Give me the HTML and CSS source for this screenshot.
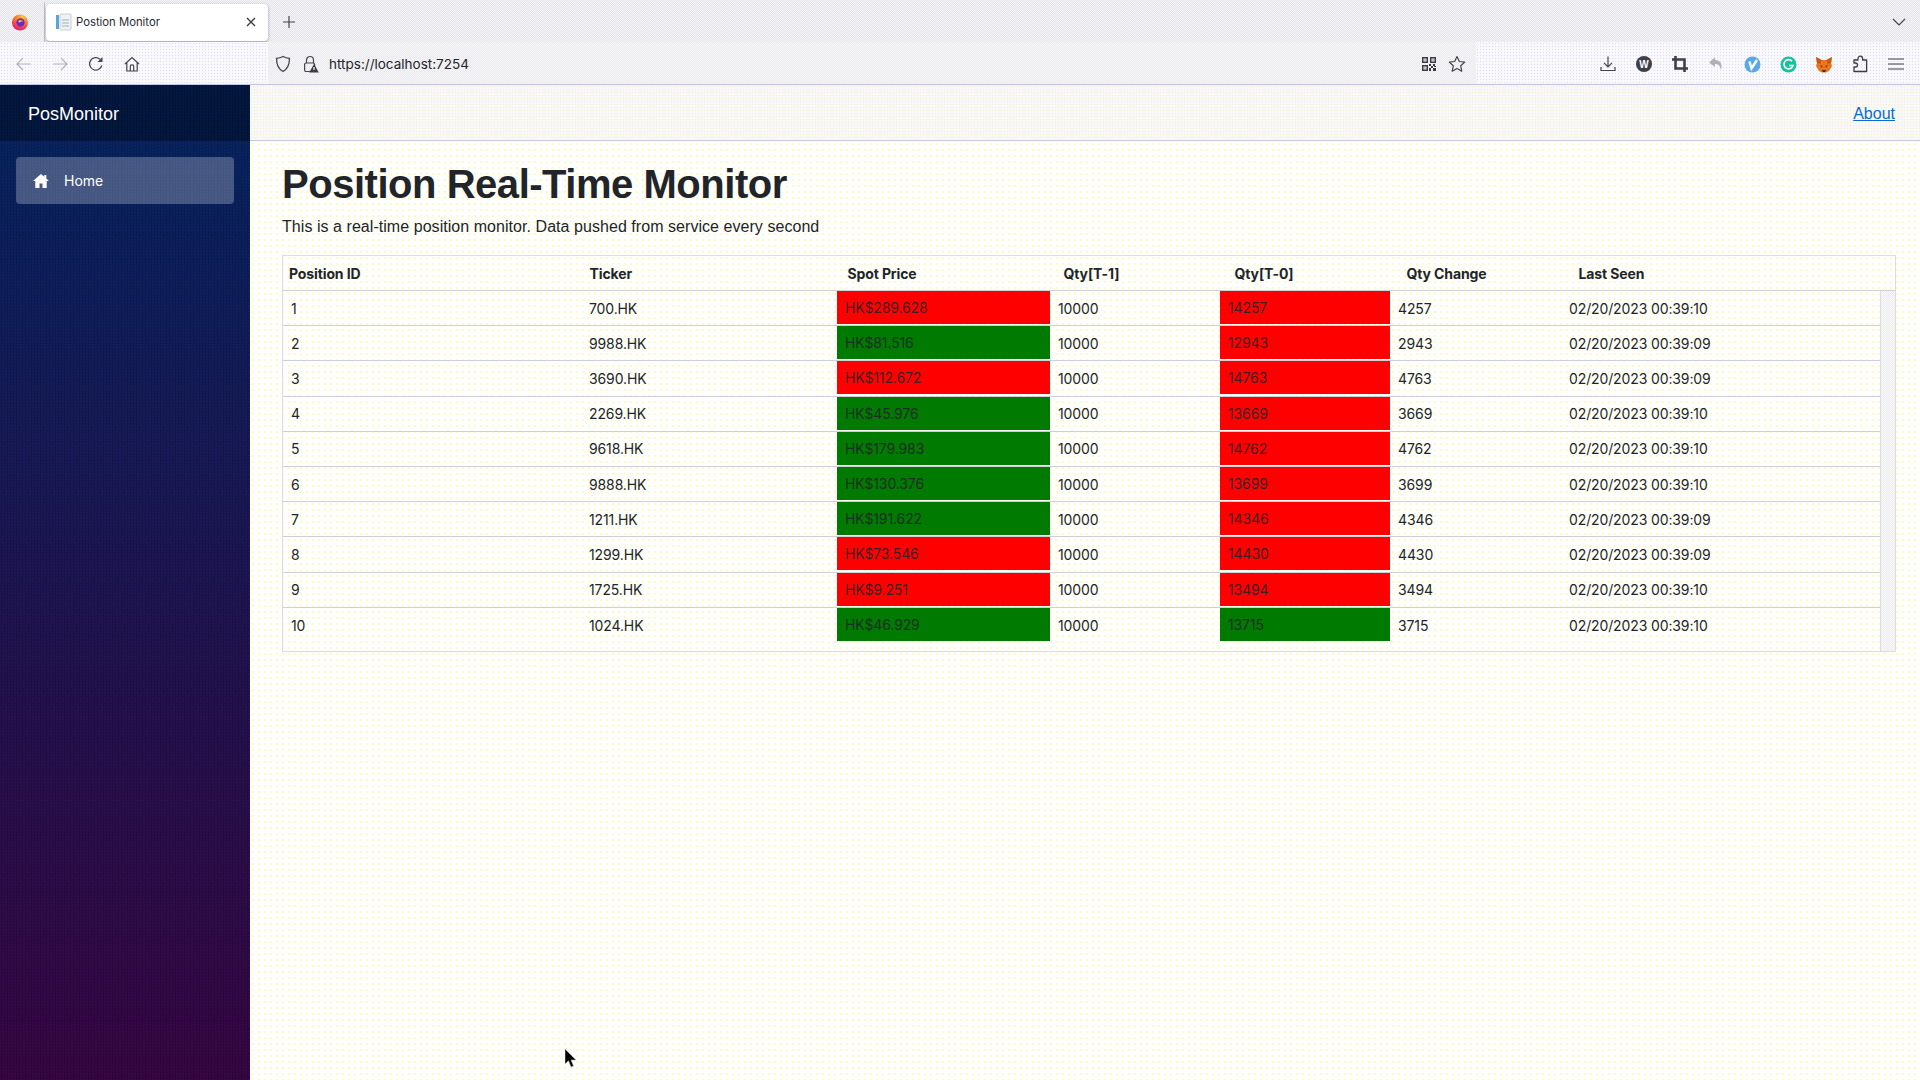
FILE: index.html
```html
<!DOCTYPE html>
<html lang="en">
<head>
  <meta charset="UTF-8">
  <title>Postion Monitor</title>
  <link rel="stylesheet" href="styles.css">
</head>
<body>

  <!-- browser tab strip -->
  <div class="tabstrip">
    <svg class="ff-logo" width="18" height="18" viewBox="0 0 18 18">
      <defs>
        <radialGradient id="ffGrad" cx="65%" cy="15%" r="95%">
          <stop offset="0" stop-color="#ffc93a"/>
          <stop offset=".45" stop-color="#ff7a2a"/>
          <stop offset=".8" stop-color="#f02a5c"/>
          <stop offset="1" stop-color="#c81e8c"/>
        </radialGradient>
      </defs>
      <circle cx="9" cy="9.5" r="8" fill="url(#ffGrad)"/>
      <circle cx="9.5" cy="9.5" r="4.2" fill="#6a2bc4"/>
      <path d="M7 8c2-1.500 4-1 5 .5-1.500-.3-2.500 0-3 1-.7 0-1.500-.5-2-1.500z" fill="#ffb02e"/>
    </svg>
    <span class="tab-divider"></span>
    <div class="tab">
      <svg width="16" height="18" viewBox="0 0 16 18">
        <rect x="0" y="2" width="3" height="14" fill="#5aa5dc"/>
        <rect x="4" y="1" width="11" height="16" rx="1" fill="#eef2f4" stroke="#b9c4c9" stroke-width=".8"/>
        <path d="M6 7h7M6 10h7M6 13h7" stroke="#a5b1b7" stroke-width="1"/>
      </svg>
      <span class="tab-title">Postion Monitor</span>
      <svg class="tab-close" width="10" height="10" viewBox="0 0 10 10"><path d="M1 1l8 8M9 1l-8 8" stroke="#33333b" stroke-width="1.200"/></svg>
    </div>
    <svg class="tab-plus" width="12" height="12" viewBox="0 0 12 12"><path d="M6 0v12M0 6h12" stroke="#44444c" stroke-width="1.200"/></svg>
    <svg class="tab-chevron" width="14" height="8" viewBox="0 0 14 8"><path d="M1 1l6 6 6-6" fill="none" stroke="#44444c" stroke-width="1.200"/></svg>
  </div>

  <!-- browser toolbar -->
  <div class="toolbar">
    <div class="nav-btns">
      <span class="tool-btn"><svg width="16" height="14" viewBox="0 0 16 14"><path d="M15 7H1.500M7 1L1 7l6 6" fill="none" stroke="#b4b4bc" stroke-width="1.200"/></svg></span>
      <span class="tool-btn"><svg width="16" height="14" viewBox="0 0 16 14"><path d="M1 7h13.500M9 1l6 6-6 6" fill="none" stroke="#b4b4bc" stroke-width="1.200"/></svg></span>
      <span class="tool-btn"><svg width="16" height="16" viewBox="0 0 16 16"><path d="M13.800 9.500A6.200 6.200 0 1 1 12 3.300" fill="none" stroke="#44444c" stroke-width="1.300"/><path d="M14.500 1v5h-5z" fill="#44444c"/></svg></span>
      <span class="tool-btn"><svg width="16" height="16" viewBox="0 0 16 16"><path d="M1 8l7-6.500L15 8M2.800 6.500V15h10.400V6.500M6.300 15v-4.500a1.700 1.700 0 0 1 3.400 0V15" fill="none" stroke="#44444c" stroke-width="1.200"/></svg></span>
    </div>
    <div class="urlbar">
      <svg class="url-shield" width="16" height="18" viewBox="0 0 16 18"><path d="M8 1.500c2 1.200 4 1.700 6.500 1.800 0 6.200-1.800 10.700-6.500 13.200C3.300 14 1.500 9.500 1.500 3.300 4 3.200 6 2.700 8 1.500z" fill="none" stroke="#44444c" stroke-width="1.300"/></svg>
      <svg class="url-lock" width="16" height="18" viewBox="0 0 16 18">
        <path d="M3.500 8V5a3.500 3.500 0 0 1 7 0v3" fill="none" stroke="#44444c" stroke-width="1.200"/>
        <rect x="1.600" y="8" width="10" height="8.500" rx="1.500" fill="none" stroke="#44444c" stroke-width="1.200"/>
        <path d="M11 9l4.800 8.500H6.200z" fill="#3c3c44"/>
        <path d="M11 12v3" stroke="#fff" stroke-width="1.200"/>
      </svg>
      <span class="url-text">https://localhost:7254</span>
      <svg class="url-qr" width="14" height="14" viewBox="0 0 14 14" fill="#3c3c44">
        <path fill-rule="evenodd" d="M0 0h6v6H0zM1.500 1.500v3h3v-3zM8 0h6v6H8zM9.500 1.500v3h3v-3zM0 8h6v6H0zM1.500 9.500v3h3v-3z"/>
        <path d="M2.500 2.500h1v1h-1zM10.500 2.500h1v1h-1zM2.500 10.500h1v1h-1zM7 7h2v2H7zM9 9h2v2H9zM11 7h2v2h-2zM7 11h2v3H7zM11 11h3v3h-3zM12 9h2v1h-2z"/>
      </svg>
      <svg class="url-star" width="18" height="18" viewBox="0 0 18 18"><path d="M9 1.500l2.300 5 5.400.6-4 3.700 1.100 5.400L9 13.500l-4.800 2.700 1.100-5.400-4-3.700 5.400-.6z" fill="none" stroke="#44444c" stroke-width="1.200" stroke-linejoin="round"/></svg>
    </div>
    <div class="ext-btns">
      <span class="tool-btn"><svg width="16" height="16" viewBox="0 0 16 16"><path d="M8 .5v10M4 6.800l4 4 4-4M1 11v3.500h14V11" fill="none" stroke="#44444c" stroke-width="1.200"/></svg></span>
      <span class="tool-btn"><svg width="16" height="16" viewBox="0 0 16 16"><circle cx="8" cy="8" r="8" fill="#3f3f4a"/><text x="8" y="11.500" text-anchor="middle" class="ext-w">W</text></svg></span>
      <span class="tool-btn"><svg width="16" height="16" viewBox="0 0 16 16"><path d="M3.500 0v12.500H16M0 3.500h12.500V16" fill="none" stroke="#3f3f4a" stroke-width="2.600"/></svg></span>
      <span class="tool-btn"><svg width="16" height="16" viewBox="0 0 16 16"><path d="M7 1L1 6.500 7 11V8c3 0 5 1 6 6 1.500-5 .5-9.500-6-10z" fill="#b0b0b6"/></svg></span>
      <span class="tool-btn"><svg width="17" height="17" viewBox="0 0 17 17"><circle cx="8.500" cy="8.500" r="8" fill="#5aa9e6"/><path d="M5.500 5.500l2 7L13 4" fill="none" stroke="#fff" stroke-width="2.400"/></svg></span>
      <span class="tool-btn"><svg width="17" height="17" viewBox="0 0 17 17"><circle cx="8.500" cy="8.500" r="8" fill="#15c39a"/><path d="M12 5.200A4.600 4.600 0 1 0 13 9.500h-4" fill="none" stroke="#fff" stroke-width="1.600"/></svg></span>
      <span class="tool-btn"><svg width="18" height="17" viewBox="0 0 18 17"><path d="M1 1l5.500 3h5L17 1l-1 6 1 3-3 5-3 1.500H7L4 15 1 10l1-3z" fill="#e8761f"/><path d="M5 9l2.500 1-.5 2zM13 9l-2.500 1 .5 2z" fill="#7a3a10"/><path d="M7 14h4l-1 2H8z" fill="#3a2a22"/><path d="M1 1l5.500 3L5 8 2 7zM17 1l-5.500 3L13 8l3-1z" fill="#c9590f"/></svg></span>
      <span class="tool-btn"><svg width="16" height="18" viewBox="0 0 16 18"><path d="M6 3.500a2.300 2.300 0 0 1 4.600 0V5h4v11.500H2V12h1.500a2 2 0 0 0 0-4H2V5h4z" fill="none" stroke="#3c3c44" stroke-width="1.300" stroke-linejoin="round"/></svg></span>
      <span class="tool-btn"><svg width="16" height="12" viewBox="0 0 16 12"><path d="M0 1h16M0 6h16M0 11h16" stroke="#3c3c44" stroke-width="1.200"/></svg></span>
    </div>
  </div>

  <div class="page">
    <!-- left nav -->
    <div class="sidebar">
      <div class="brand">PosMonitor</div>
      <div class="nav-item">
        <svg width="16" height="16" viewBox="0 0 16 16"><path fill="#fff" d="M8 1L0 8h2.300v7h4.200v-4.500h3V15h4.200V8H16l-2.700-2.400V2h-2v1.800z"/></svg>
        <span>Home</span>
      </div>
    </div>

    <div class="main">
      <div class="top-row"><a href="#">About</a></div>
      <div class="content">
        <h1>Position Real-Time Monitor</h1>
        <p>This is a real-time position monitor. Data pushed from service every second</p>

        <div class="pos-table">
          <div class="head-row">
            <div>Position ID</div>
            <div>Ticker</div>
            <div>Spot Price</div>
            <div>Qty[T-1]</div>
            <div>Qty[T-0]</div>
            <div>Qty Change</div>
            <div>Last Seen</div>
          </div>
          <div class="table-body">
            <div class="rows">
              <div class="row"><div>1</div><div>700.HK</div><div class="cell up">HK$289.628</div><div>10000</div><div class="cell up">14257</div><div>4257</div><div>02/20/2023 00:39:10</div></div>
              <div class="row"><div>2</div><div>9988.HK</div><div class="cell down">HK$81.516</div><div>10000</div><div class="cell up">12943</div><div>2943</div><div>02/20/2023 00:39:09</div></div>
              <div class="row"><div>3</div><div>3690.HK</div><div class="cell up">HK$112.672</div><div>10000</div><div class="cell up">14763</div><div>4763</div><div>02/20/2023 00:39:09</div></div>
              <div class="row"><div>4</div><div>2269.HK</div><div class="cell down">HK$45.976</div><div>10000</div><div class="cell up">13669</div><div>3669</div><div>02/20/2023 00:39:10</div></div>
              <div class="row"><div>5</div><div>9618.HK</div><div class="cell down">HK$179.983</div><div>10000</div><div class="cell up">14762</div><div>4762</div><div>02/20/2023 00:39:10</div></div>
              <div class="row"><div>6</div><div>9888.HK</div><div class="cell down">HK$130.376</div><div>10000</div><div class="cell up">13699</div><div>3699</div><div>02/20/2023 00:39:10</div></div>
              <div class="row"><div>7</div><div>1211.HK</div><div class="cell down">HK$191.622</div><div>10000</div><div class="cell up">14346</div><div>4346</div><div>02/20/2023 00:39:09</div></div>
              <div class="row"><div>8</div><div>1299.HK</div><div class="cell up">HK$73.546</div><div>10000</div><div class="cell up">14430</div><div>4430</div><div>02/20/2023 00:39:09</div></div>
              <div class="row"><div>9</div><div>1725.HK</div><div class="cell up">HK$9.251</div><div>10000</div><div class="cell up">13494</div><div>3494</div><div>02/20/2023 00:39:10</div></div>
              <div class="row"><div>10</div><div>1024.HK</div><div class="cell down">HK$46.929</div><div>10000</div><div class="cell down">13715</div><div>3715</div><div>02/20/2023 00:39:10</div></div>
            </div>
            <div class="scroll-strip"></div>
          </div>
        </div>
      </div>
    </div>
  </div>

  <!-- mouse pointer caught in the screenshot -->
  <svg class="pointer" width="12" height="19" viewBox="0 0 12 19"><path d="M0 0v15l3.500-3.300L6 18l2.500-1-2.500-6h5z" fill="#000" stroke="#bbb" stroke-width=".6"/></svg>

</body>
</html>
```

FILE: styles.css
```css
html, body {
  margin: 0;
  height: 100%;
  overflow: hidden;
}

body {
  font-family: "Liberation Sans", Arial, sans-serif;
  color: #212529;
  background-color: #fffffd;
  display: flex;
  flex-direction: column;
  position: relative;
}

/* tab strip */
.tabstrip {
  height: 42px;
  box-sizing: border-box;
  padding-top: 2px;
  flex: none;
  display: flex;
  align-items: center;
  background: #ececf1;
  background-image: repeating-conic-gradient(#e3e3ea 0 25%, #f6f6f6 0 50%);
  background-size: 2px 2px;
}

.ff-logo {
  margin-left: 11px;
  flex: none;
}

.tab-divider {
  width: 1px;
  height: 40px;
  margin: 0 1px 0 15px;
  background: #c4c4ce;
}

.tab {
  width: 222px;
  height: 37px;
  box-sizing: border-box;
  padding: 0 12px 0 10px;
  display: flex;
  align-items: center;
  background: #fff;
  border-radius: 4px;
  box-shadow: 0 1px 3px rgba(40, 40, 90, .45);
}

.tab-title {
  margin-left: 4px;
  font-family: Inter, sans-serif;
  font-size: 11.300px;
  color: #2a2a32;
}

.tab-close {
  margin-left: auto;
}

.tab-plus {
  margin-left: 15px;
}

.tab-chevron {
  margin-left: auto;
  margin-right: 14px;
}

/* toolbar */
.toolbar {
  height: 42px;
  flex: none;
  display: flex;
  background: #f8f8fd;
  background-image: radial-gradient(#dcdcf4 .7px, transparent 1px);
  background-size: 3px 3px;
  border-bottom: 1px solid #c3c3e0;
}

.nav-btns {
  width: 262px;
  padding-left: 6px;
  display: flex;
  flex: none;
}

.tool-btn {
  width: 36px;
  height: 42px;
  padding-top: 2px;
  box-sizing: border-box;
  display: flex;
  align-items: center;
  justify-content: center;
  flex: none;
}

.urlbar {
  width: 1208px;
  padding-top: 2px;
  box-sizing: border-box;
  flex: none;
  display: flex;
  align-items: center;
  background: #f1f1f4;
  background-image: repeating-conic-gradient(#e9e9ee 0 25%, #f6f6f6 0 50%);
  background-size: 2px 2px;
}

.url-shield {
  margin-left: 7px;
}

.url-lock {
  margin-left: 12px;
}

.url-text {
  margin-left: 10px;
  font-family: Inter, sans-serif;
  font-size: 13.500px;
  color: #24242c;
}

.url-qr {
  margin-left: auto;
}

.url-star {
  margin: 0 10px 0 12px;
}

.ext-btns {
  margin-left: auto;
  margin-right: 6px;
  display: flex;
}

.ext-w {
  font-family: "Liberation Sans", sans-serif;
  font-weight: bold;
  font-size: 10px;
  fill: #fff;
}

/* page */
.page {
  flex: 1;
  min-height: 0;
  display: flex;
}

.sidebar {
  width: 250px;
  flex: none;
  background-image:
    repeating-conic-gradient(rgba(0, 0, 0, .2) 0 25%, transparent 0 50%),
    linear-gradient(180deg, #052767 0%, #3a0647 100%);
  background-size: 3px 3px, 100% 100%;
}

.brand {
  height: 56px;
  padding: 2px 0 0 28px;
  box-sizing: border-box;
  display: flex;
  align-items: center;
  font-size: 18px;
  color: #fff;
  background: rgba(0, 0, 0, .35);
}

.nav-item {
  height: 47px;
  margin: 16px 16px 0;
  padding-left: 17px;
  display: flex;
  align-items: center;
  gap: 15px;
  font-family: Inter, sans-serif;
  font-size: 14px;
  color: #fff;
  background: rgba(255, 255, 255, .25);
  border-radius: 4px;
}

.main {
  flex: 1;
  min-width: 0;
  display: flex;
  flex-direction: column;
}

.top-row {
  height: 56px;
  padding: 3px 25px 0 0;
  box-sizing: border-box;
  flex: none;
  display: flex;
  align-items: center;
  justify-content: flex-end;
  background: #f8f8f8;
  background-image: radial-gradient(#f4efc8 .7px, transparent 1px);
  background-size: 3px 3px;
  border-bottom: 1px solid #c9c9e0;
}

.top-row a {
  color: #0a6ad0;
  font-size: 16px;
}

.content {
  flex: 1;
  min-height: 0;
  padding: 19px 24px 0 32px;
  background-image: radial-gradient(#fff8c8 .7px, transparent 1px);
  background-size: 6px 6px;
}

h1 {
  margin: 0 0 7px;
  font-size: 40px;
  line-height: 48px;
  font-weight: bold;
  letter-spacing: -.47px;
}

p {
  margin: 0 0 16px;
  font-size: 16px;
  line-height: 24px;
  letter-spacing: .05px;
}

.pos-table {
  border: 1px solid #dcdce4;
  font-family: Inter, sans-serif;
  font-size: 14px;
  letter-spacing: -.12px;
}

.head-row {
  height: 34px;
  display: grid;
  grid-template-columns: 300.500px 258px 216px 171px 172px 172px 1fr;
  align-items: center;
  font-weight: 700;
  border-bottom: 1px solid #cfcfd6;
}

.head-row div {
  padding-left: 6px;
}

.table-body {
  display: flex;
}

.rows {
  flex: 1;
  padding-bottom: 8px;
}

.row {
  height: 35.200px;
  box-sizing: border-box;
  display: grid;
  grid-template-columns: 298px 256px 213px 170px 170px 171px 1fr;
  align-items: center;
  border-bottom: 1px solid #cfcfd6;
}

.row:last-child {
  border-bottom: none;
}

.row div {
  padding-left: 8px;
}

.cell {
  height: 33px;
  margin-bottom: 1px;
  display: flex;
  align-items: center;
  color: rgba(33, 37, 41, .9);
}

.up {
  background: #ff0000;
}

.down {
  background: #007a00;
}

.scroll-strip {
  width: 15px;
  flex: none;
  border-left: 1px solid #dcdce4;
  box-sizing: border-box;
  background: #f4f4f4;
  background-image: repeating-conic-gradient(#e9e9ee 0 25%, #fbfbfb 0 50%);
  background-size: 2px 2px;
}

.pointer {
  position: absolute;
  left: 565px;
  top: 1049px;
}
```
